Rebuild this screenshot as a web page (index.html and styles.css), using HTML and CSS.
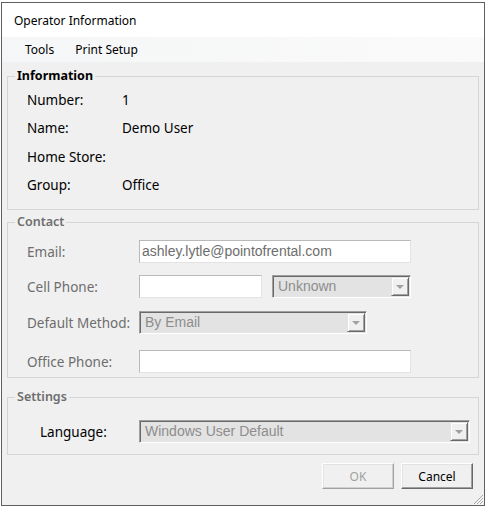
FILE: index.html
```html
<!DOCTYPE html>
<html>
<head>
<meta charset="utf-8">
<title>Operator Information</title>
<link rel="stylesheet" href="styles.css">
</head>
<body>
<div class="window">
  <div class="titlebar">Operator Information</div>
  <div class="menubar">
    <span class="menu-item">Tools</span>
    <span class="menu-item">Print Setup</span>
  </div>
  <div class="client">
    <fieldset class="group group-info">
      <legend class="legend legend-bold">Information</legend>
      <div class="info-grid">
        <span>Number:</span><span>1</span>
        <span>Name:</span><span>Demo User</span>
        <span>Home Store:</span><span></span>
        <span>Group:</span><span>Office</span>
      </div>
    </fieldset>

    <fieldset class="group group-contact">
      <legend class="legend legend-disabled">Contact</legend>
      <div class="form-rows">
        <div class="form-row">
          <span class="flabel">Email:</span>
          <div class="textbox textbox-wide">ashley.lytle@pointofrental.com</div>
        </div>
        <div class="form-row">
          <span class="flabel">Cell Phone:</span>
          <div class="textbox textbox-short"></div>
          <div class="combo combo-unknown"><span class="combo-text">Unknown</span><span class="combo-btn"><span class="arrow"></span></span></div>
        </div>
        <div class="form-row row-default">
          <span class="flabel">Default Method:</span>
          <div class="combo combo-method"><span class="combo-text">By Email</span><span class="combo-btn"><span class="arrow"></span></span></div>
        </div>
        <div class="form-row row-office">
          <span class="flabel">Office Phone:</span>
          <div class="textbox textbox-wide"></div>
        </div>
      </div>
    </fieldset>

    <fieldset class="group group-settings">
      <legend class="legend legend-disabled">Settings</legend>
      <div class="settings-row">
        <span class="flabel flabel-lang">Language:</span>
        <div class="combo combo-lang"><span class="combo-text">Windows User Default</span><span class="combo-btn"><span class="arrow"></span></span></div>
      </div>
    </fieldset>

    <div class="buttons">
      <button class="btn btn-disabled" disabled>OK</button>
      <button class="btn">Cancel</button>
    </div>
  </div>
  <svg class="grip" width="12" height="12" viewBox="0 0 12 12">
    <path d="M11 2 L2 11 M11 5 L5 11 M11 8 L8 11" stroke="#a8a8a8" stroke-width="1" fill="none"/>
    <path d="M12 3 L3 12 M12 6 L6 12 M12 9 L9 12" stroke="#ffffff" stroke-width="1" fill="none"/>
  </svg>
</div>
</body>
</html>
```

FILE: styles.css
```css
html, body {
  margin: 0;
  padding: 0;
  background: #ffffff;
}

body {
  font-family: "Noto Sans", "Open Sans", sans-serif;
  font-size: 12px;
  color: #000;
}

.window {
  position: relative;
  box-sizing: border-box;
  width: 484px;
  height: 504px;
  margin: 2px 0 0 1px;
  border: 1px solid #5f5f5f;
  background: #f0f0f0;
  display: flex;
  flex-direction: column;
}

.titlebar {
  height: 34px;
  background: #ffffff;
  padding-left: 12px;
  display: flex;
  align-items: center;
  font-size: 12px;
  color: #000;
}

.menubar {
  height: 25px;
  background: linear-gradient(to right, #f5f6f7, #fafafa);
  display: flex;
  align-items: center;
  padding-left: 16px;
}

.menu-item {
  padding: 0 7px;
  margin-right: 7px;
}

.client {
  flex: 1;
  display: flex;
  flex-direction: column;
}

.group {
  margin: 0 5px;
  padding: 0;
  border: 1px solid #d5d5d5;
  min-width: 0;
}

.legend {
  margin-left: 7px;
  padding: 0 2px;
  line-height: 16px;
  height: 16px;
  font-size: 12.5px;
}

.legend-bold {
  font-weight: bold;
  color: #000;
}

.legend-disabled {
  color: #6d6d6d;
  font-weight: 600;
}

.group-info {
  margin-top: 6px;
}

.info-grid {
  display: grid;
  grid-template-columns: 95px auto;
  grid-template-rows: 28px 28px 29px 28px;
  align-items: center;
  padding: 2px 0 10px 19px;
  font-size: 13.5px;
}

.group-contact {
  margin-top: 4px;
}

.form-rows {
  display: flex;
  flex-direction: column;
  gap: 12px;
  padding: 10px 0 4px 19px;
}

.form-row {
  display: flex;
  align-items: center;
  height: 23px;
}

.row-default {
  margin-top: 1px;
}

.row-office {
  margin-top: 4px;
}

.flabel {
  width: 112px;
  flex: none;
  color: #6d6d6d;
  font-size: 13.5px;
  white-space: nowrap;
}

.textbox {
  box-sizing: border-box;
  height: 23px;
  background: #ffffff;
  border: 1px solid;
  border-color: #b9b9b9 #e3e3e3 #e3e3e3 #b9b9b9;
  font-family: "Liberation Sans", Arial, sans-serif;
  font-size: 14px;
  line-height: 21px;
  padding-left: 2px;
  color: #6d6d6d;
  white-space: nowrap;
  overflow: hidden;
}

.textbox-wide {
  width: 272px;
}

.textbox-short {
  width: 123px;
}

.combo {
  box-sizing: border-box;
  height: 23px;
  display: flex;
  background: #e3e3e3;
  border: 1px solid;
  border-color: #a0a0a0 #ffffff #ffffff #a0a0a0;
  box-shadow: inset 1px 1px 0 #696969, inset -1px -1px 0 #e3e3e3;
  padding: 1px;
}

.combo-text {
  flex: 1;
  font-family: "Liberation Sans", Arial, sans-serif;
  font-size: 14px;
  line-height: 19px;
  padding-left: 4px;
  color: #8d8d8d;
  white-space: nowrap;
  overflow: hidden;
}

.combo-btn {
  box-sizing: border-box;
  width: 18px;
  height: 19px;
  background: #f0f0f0;
  border: 1px solid;
  border-color: #e3e3e3 #696969 #696969 #e3e3e3;
  box-shadow: inset 1px 1px 0 #ffffff, inset -1px -1px 0 #a0a0a0;
  display: flex;
  align-items: center;
  justify-content: center;
}

.arrow {
  width: 0;
  height: 0;
  border-left: 4px solid transparent;
  border-right: 4px solid transparent;
  border-top: 4px solid #a0a0a0;
  margin-top: 1px;
}

.combo-unknown {
  width: 139px;
  margin-left: 10px;
}

.combo-method {
  width: 228px;
}

.group-settings {
  margin-top: 11px;
}

.settings-row {
  display: flex;
  align-items: center;
  height: 23px;
  padding: 15px 0 11px 32px;
}

.flabel-lang {
  width: 99px;
  color: #000;
}

.combo-lang {
  width: 331px;
}

.buttons {
  display: flex;
  justify-content: flex-end;
  gap: 7px;
  margin-top: 8px;
  padding-right: 11px;
}

.btn {
  box-sizing: border-box;
  width: 72px;
  height: 26px;
  font-family: "Noto Sans", "Open Sans", sans-serif;
  font-size: 12px;
  background: #f0f0f0;
  border: 1px solid;
  border-color: #ffffff #696969 #696969 #ffffff;
  box-shadow: inset -1px -1px 0 #a0a0a0, inset 1px 1px 0 #e3e3e3;
  color: #000;
  padding: 0;
}

.btn-disabled {
  color: #a0a0a0;
  border-color: #ffffff #a0a0a0 #a0a0a0 #ffffff;
  box-shadow: inset -1px -1px 0 #d0d0d0, inset 1px 1px 0 #e3e3e3;
}

.grip {
  position: absolute;
  right: 0;
  bottom: 0;
}
```
